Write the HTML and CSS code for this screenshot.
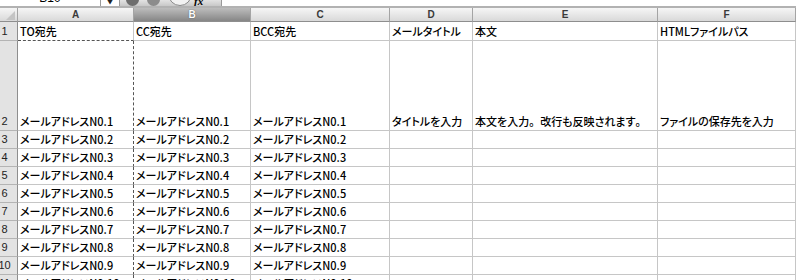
FILE: index.html
```html
<!DOCTYPE html>
<html lang="ja">
<head>
  <meta charset="UTF-8" />
  <meta name="viewport" content="width=device-width, initial-scale=1" />
  <title>メール送信リスト</title>
  <link rel="stylesheet" href="styles.css">
</head>
<body>
  <!-- Formula bar (only its lower edge is in view) -->
  <div class="formula-bar">
    <div class="name-box"><span>B10</span></div>
    <div class="name-drop">▼</div>
    <div class="fx-tools">
      <span class="fx-btn dark"></span>
      <span class="fx-btn"></span>
      <span class="fx-btn big"></span>
      <span class="fx-label">fx</span>
    </div>
    <div class="fx-input"></div>
  </div>

  <!-- Sheet grid -->
  <div class="sheet">
    <div class="corner"><span class="corner-tri"></span></div>
    <div class="col-head">A</div>
    <div class="col-head selected">B</div>
    <div class="col-head">C</div>
    <div class="col-head">D</div>
    <div class="col-head">E</div>
    <div class="col-head">F</div>

    <div class="row-head">1</div>
    <div class="cell marquee-top">TO宛先</div>
    <div class="cell">CC宛先</div>
    <div class="cell">BCC宛先</div>
    <div class="cell">メールタイトル</div>
    <div class="cell">本文</div>
    <div class="cell">HTMLファイルパス</div>

    <div class="row-head">2</div>
    <div class="cell marquee">メールアドレスN0.1</div>
    <div class="cell">メールアドレスN0.1</div>
    <div class="cell">メールアドレスN0.1</div>
    <div class="cell">タイトルを入力</div>
    <div class="cell">本文を入力<span class="full">。</span>改行も反映されます<span class="full">。</span></div>
    <div class="cell">ファイルの保存先を入力</div>
  </div>

  <script>
    // rows 3..11 only repeat the address columns
    var sheet = document.querySelector('.sheet');
    for (var i = 3; i <= 11; i++) {
      var html = '<div class="row-head">' + i + '</div>';
      var addr = 'メールアドレスN0.' + (i - 1);
      html += '<div class="cell marquee">' + addr + '</div>';
      html += '<div class="cell">' + addr + '</div>';
      html += '<div class="cell">' + addr + '</div>';
      html += '<div class="cell"></div><div class="cell"></div><div class="cell"></div>';
      sheet.insertAdjacentHTML('beforeend', html);
    }
  </script>
</body>
</html>
```

FILE: styles.css
```css
* {
  margin: 0;
  padding: 0;
  box-sizing: border-box;
}

body {
  width: 796px;
  height: 280px;
  overflow: hidden;
  background: #fff;
  font-family: "Noto Sans CJK JP", "Liberation Sans", sans-serif;
  color: #000;
}

/* Formula bar */
.formula-bar {
  display: flex;
  height: 8px;
  border-bottom: 2px solid #b2b2b2;
  overflow: hidden;
}

.name-box {
  width: 100px;
  text-align: center;
  font-family: "Liberation Sans", sans-serif;
  font-size: 12px;
  line-height: 12px;
}

.name-box span {
  display: block;
  margin-top: -8px;
}

.name-drop {
  width: 20px;
  border-left: 1px solid #9a9a9a;
  border-right: 1px solid #9a9a9a;
  font-size: 8px;
  line-height: 8px;
  margin-top: -3px;
  text-align: center;
  color: #222;
}

.fx-tools {
  width: 102px;
  display: flex;
  align-items: flex-end;
  gap: 8px;
  padding-left: 6px;
  background: linear-gradient(#e2e2e2, #c8c8c8);
  border-right: 1px solid #9a9a9a;
}

.fx-btn {
  width: 13px;
  height: 13px;
  margin-top: -7px;
  border-radius: 50%;
  background: #8c8c8c;
  align-self: flex-start;
  flex: none;
}

.fx-btn.dark {
  background: #6e6e6e;
}

.fx-btn.big {
  width: 24px;
  height: 24px;
  margin-top: -18px;
  background: #f2f2f2;
  border: 1px solid #8a8a8a;
}

.fx-label {
  font-family: "Liberation Serif", serif;
  font-style: italic;
  font-weight: bold;
  font-size: 11px;
  line-height: 8px;
  margin-left: -6px;
  align-self: flex-start;
  margin-top: -3px;
}

.fx-input {
  flex: 1;
}

/* Grid */
.sheet {
  display: grid;
  grid-template-columns: 18px 116px 117px 139px 83px 185px 1fr;
  grid-template-rows: 14px 19px 90px repeat(9, 18px);
}

.corner,
.col-head {
  background: linear-gradient(#f6f6f6, #d9d9d9);
  border-right: 1px solid #a4a4a4;
  border-bottom: 1px solid #8e8e8e;
}

.corner {
  position: relative;
}

.corner-tri {
  position: absolute;
  right: 2px;
  bottom: 1px;
  width: 0;
  height: 0;
  border-left: 9px solid transparent;
  border-bottom: 9px solid #c4c4c4;
}

.col-head {
  font-family: "Liberation Sans", sans-serif;
  font-weight: bold;
  font-size: 10px;
  line-height: 13px;
  text-align: center;
  color: #3a3a3a;
}

.col-head.selected {
  background: linear-gradient(#bdbdbd, #868686);
  color: #fff;
  text-shadow: 0 0 1px #333;
}

.row-head {
  background: #e3e3e3;
  border-right: 1px solid #8e8e8e;
  border-bottom: 1px solid #b4b4b4;
  font-family: "Liberation Sans", sans-serif;
  font-size: 11px;
  color: #222;
  padding-right: 8px;
  display: flex;
  align-items: flex-end;
  justify-content: center;
  padding-bottom: 2px;
  line-height: 13px;
}

.cell {
  border-right: 1px solid #c6c6c6;
  border-bottom: 1px solid #c6c6c6;
  font-size: 11px;
  font-weight: 500;
  font-feature-settings: "palt";
  line-height: 14px;
  padding: 0 2px 2px;
  white-space: nowrap;
  overflow: hidden;
  display: flex;
  align-items: flex-end;
}

/* full-width punctuation keeps its em box */
.cell .full {
  font-feature-settings: normal;
}

/* copy marquee around column A */
.cell.marquee-top {
  border-bottom: 1px dashed #555;
}

.cell.marquee {
  border-right: 1px dashed #555;
}
```
